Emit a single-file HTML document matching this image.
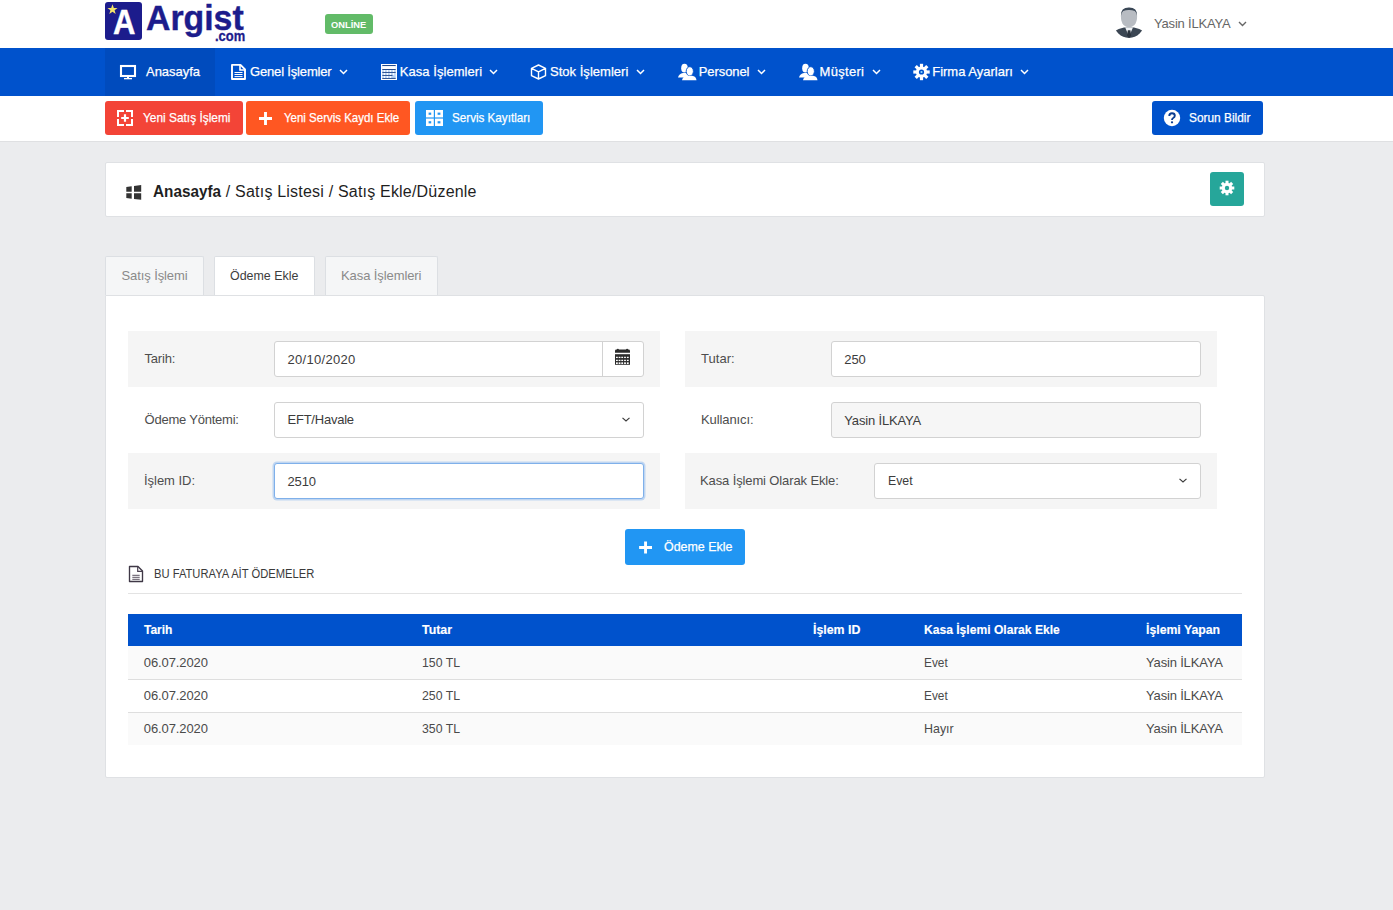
<!DOCTYPE html>
<html><head><meta charset="utf-8">
<style>
*{box-sizing:border-box;margin:0;padding:0}
html,body{width:1393px;height:910px;overflow:hidden;background:#ebecee;font-family:"Liberation Sans",sans-serif;color:#333}
.a{position:absolute}
.t{position:absolute;white-space:nowrap;line-height:1}
svg{position:absolute;overflow:visible}
.nv{position:absolute;color:#fff;font-size:13px;top:65px;line-height:1;white-space:nowrap;-webkit-text-stroke:0.25px #fff}
.bt{position:absolute;color:#fff;font-size:13px;top:111px;line-height:1;white-space:nowrap;-webkit-text-stroke:0.25px #fff}
.card{position:absolute;background:#fff;border:1px solid #dfe1e4;border-radius:2px}
.row{position:absolute;height:56px;background:#f5f5f5}
.lbl{position:absolute;font-size:13px;color:#4d4d4d;line-height:1;white-space:nowrap}
.inp{position:absolute;height:36px;border:1px solid #d2d2d2;border-radius:3px;background:#fff}
.iv{position:absolute;font-size:13px;color:#3c3c3c;line-height:1;white-space:nowrap}
.th{position:absolute;color:#fff;font-weight:bold;font-size:13px;line-height:1;top:623px;white-space:nowrap;-webkit-text-stroke:0.15px #fff}
.td{position:absolute;color:#4a4a4a;font-size:13px;line-height:1;white-space:nowrap}
</style></head><body>
<!-- header -->
<div class="a" style="left:0;top:0;width:1393px;height:48px;background:#fff"></div>
<div class="a" style="left:0;top:48px;width:1393px;height:48px;background:#0052cc"></div>
<div class="a" style="left:0;top:96px;width:1393px;height:46px;background:#fff;border-bottom:1px solid #dfe0e2"></div>

<!-- logo -->
<div class="a" style="left:105px;top:2px;width:37px;height:38px;background:#1c1c8c;border-radius:3px"></div>
<svg style="left:107px;top:4px" width="11" height="11" viewBox="0 0 10 10"><polygon fill="#f3e46a" points="5,0.3 6.2,3.6 9.6,3.6 6.9,5.7 7.9,9.2 5,7.1 2.1,9.2 3.1,5.7 0.4,3.6 3.8,3.6"/></svg>
<div class="t" style="left:112.8px;top:4.6px;font-size:35.5px;font-weight:bold;color:#fff;-webkit-text-stroke:0.4px #fff;transform:scaleX(0.875);transform-origin:0 0">A</div>
<div class="t" style="left:146px;top:0.8px;font-size:35.5px;font-weight:bold;color:#1c1c8c;-webkit-text-stroke:0.4px #1c1c8c;transform:scaleX(0.952);transform-origin:0 0">Argist</div>
<div class="t" style="left:215px;top:28.3px;font-size:15px;font-weight:bold;color:#1c1c8c;-webkit-text-stroke:0.3px #1c1c8c;transform:scaleX(0.86);transform-origin:0 0">.com</div>

<!-- online -->
<div class="a" style="left:325px;top:14px;width:48px;height:20px;background:#62bb68;border-radius:3px"></div>
<div class="t" style="left:331px;top:19.8px;font-size:9.5px;font-weight:bold;color:#fff;transform:scaleX(0.98);transform-origin:0 0">ONLİNE</div>

<!-- avatar -->
<svg style="left:1110px;top:2px" width="40" height="40" viewBox="0 0 40 40">
 <defs><clipPath id="avc"><circle cx="19" cy="21" r="15"/></clipPath></defs>
 <g clip-path="url(#avc)">
 <path d="M2 40 L2 31 Q7 27 14 25.6 L24 25.6 Q31 27 36 31 L36 40 Z" fill="#3b4653"/>
 <path d="M15.2 25.6 L19 34.5 L23 25.6 Z" fill="#eef1f4"/>
 <path d="M17.8 28.3 L20.4 28.3 L21.1 33.5 L19.1 36 L17.1 33.5 Z" fill="#2a323d"/>
 </g>
 <path d="M10.9 14.5 Q10.9 5.8 19 5.8 Q27.1 5.8 27.1 14.5 Q27.1 20 24.5 23 Q22 25.3 19 25.3 Q16 25.3 13.5 23 Q10.9 20 10.9 14.5 Z" fill="#b8bcc2"/>
 <path d="M10.9 14 Q10.6 5.6 19 5.6 Q27.4 5.6 27.1 14 Q26.3 10 24.8 9 Q22 7.8 19 7.9 Q16 7.8 13.2 9 Q11.7 10 10.9 14 Z" fill="#3a4756"/>
</svg>
<div class="t" style="left:1154px;top:17px;font-size:13px;color:#666;letter-spacing:-0.18px">Yasin İLKAYA</div>
<svg style="left:1238px;top:21px" width="9" height="6" viewBox="0 0 9 6"><path d="M1 1 L4.5 4.5 L8 1" fill="none" stroke="#666" stroke-width="1.4"/></svg>

<!-- nav -->
<div class="a" style="left:105px;top:48px;width:110px;height:48px;background:#004bbd"></div>
<svg style="left:119px;top:64px" width="18" height="16" viewBox="0 0 18 16"><rect x="2" y="2" width="14" height="10" fill="none" stroke="#fff" stroke-width="2.1"/><rect x="8" y="12.5" width="2" height="2" fill="#fff"/><rect x="5" y="14" width="8" height="1.3" fill="#fff"/></svg>
<div class="nv" style="left:146px;letter-spacing:-0.03px">Anasayfa</div>

<svg style="left:230px;top:63px" width="17" height="18" viewBox="0 0 17 18"><path d="M2 1.9 L10.5 1.9 L15 6.4 L15 16 L2 16 Z" fill="none" stroke="#fff" stroke-width="1.9" stroke-linejoin="round"/><path d="M10 2 L10 7 L15 7" fill="none" stroke="#fff" stroke-width="1.6"/><path d="M4.5 9.5 H12.5 M4.5 11.5 H12.5 M4.5 13.6 H12.5" stroke="#fff" stroke-width="1"/></svg>
<div class="nv" style="left:250px;letter-spacing:-0.165px">Genel İşlemler</div>
<svg style="left:339px;top:69px" width="9" height="6" viewBox="0 0 9 6"><path d="M1 1 L4.5 4.5 L8 1" fill="none" stroke="#fff" stroke-width="1.5"/></svg>

<svg style="left:380px;top:63px" width="18" height="18" viewBox="0 0 18 18"><rect x="1" y="1" width="16" height="16" fill="#fff"/><rect x="2.3" y="2" width="13.4" height="14" fill="#b9d3f5"/><rect x="2.3" y="3.2" width="13.4" height="3" fill="#fff"/><path d="M2.3 2.5H15.7M2.3 6.5H15.7M2.3 9.4H15.7M2.3 12.4H12.5M2.3 15.4H15.7" stroke="#123a80" stroke-width="0.9"/><g fill="#fff"><circle cx="4.4" cy="8.0" r="0.9"/><circle cx="7.4" cy="8.0" r="0.9"/><circle cx="10.4" cy="8.0" r="0.9"/><circle cx="13.5" cy="8.0" r="0.9"/><circle cx="4.4" cy="11.0" r="0.9"/><circle cx="7.4" cy="11.0" r="0.9"/><circle cx="10.4" cy="11.0" r="0.9"/><circle cx="13.5" cy="11.0" r="0.9"/><circle cx="4.4" cy="14.0" r="0.9"/><circle cx="7.4" cy="14.0" r="0.9"/><circle cx="10.4" cy="14.0" r="0.9"/></g></svg>
<div class="nv" style="left:399.8px;letter-spacing:0.05px">Kasa İşlemleri</div>
<svg style="left:489px;top:69px" width="9" height="6" viewBox="0 0 9 6"><path d="M1 1 L4.5 4.5 L8 1" fill="none" stroke="#fff" stroke-width="1.5"/></svg>

<svg style="left:530px;top:64px" width="17" height="16" viewBox="0 0 17 16"><path d="M8.5 1 L15.5 4.3 L15.5 11.7 L8.5 15 L1.5 11.7 L1.5 4.3 Z M1.5 4.3 L8.5 7.8 L15.5 4.3 M8.5 7.8 V15" fill="none" stroke="#fff" stroke-width="1.4" stroke-linejoin="round"/></svg>
<div class="nv" style="left:550px;letter-spacing:0.02px">Stok İşlemleri</div>
<svg style="left:636px;top:69px" width="9" height="6" viewBox="0 0 9 6"><path d="M1 1 L4.5 4.5 L8 1" fill="none" stroke="#fff" stroke-width="1.5"/></svg>

<svg style="left:677px;top:63px" width="20" height="18" viewBox="0 0 20 18"><ellipse cx="7.5" cy="5.2" rx="3.3" ry="4.4" fill="#fff"/><path d="M1 14.5 Q2 10.5 6 10 L9 10 Q11 10.5 11.5 12 L11 14.5 Z" fill="#fff"/><ellipse cx="12.8" cy="8.3" rx="3.6" ry="4.6" fill="#fff" stroke="#0052cc" stroke-width="0.9"/><path d="M5 17.2 Q5.8 13.2 10.5 12.8 L15 12.8 Q19 13.2 19.5 17.2 Z" fill="#fff"/></svg>
<div class="nv" style="left:698.8px;letter-spacing:-0.1px">Personel</div>
<svg style="left:757px;top:69px" width="9" height="6" viewBox="0 0 9 6"><path d="M1 1 L4.5 4.5 L8 1" fill="none" stroke="#fff" stroke-width="1.5"/></svg>

<svg style="left:798px;top:63px" width="20" height="18" viewBox="0 0 20 18"><ellipse cx="7.5" cy="5.2" rx="3.3" ry="4.4" fill="#fff"/><path d="M1 14.5 Q2 10.5 6 10 L9 10 Q11 10.5 11.5 12 L11 14.5 Z" fill="#fff"/><ellipse cx="12.8" cy="8.3" rx="3.6" ry="4.6" fill="#fff" stroke="#0052cc" stroke-width="0.9"/><path d="M5 17.2 Q5.8 13.2 10.5 12.8 L15 12.8 Q19 13.2 19.5 17.2 Z" fill="#fff"/></svg>
<div class="nv" style="left:819.6px;letter-spacing:0.3px">Müşteri</div>
<svg style="left:872px;top:69px" width="9" height="6" viewBox="0 0 9 6"><path d="M1 1 L4.5 4.5 L8 1" fill="none" stroke="#fff" stroke-width="1.5"/></svg>

<svg style="left:912px;top:63px" width="19" height="18" viewBox="0 0 19 18"><g transform="translate(9.5,9)" fill="#fff"><circle r="5.6"/><rect x="-1.6" y="-8.2" width="3.2" height="16.4"/><rect x="-1.6" y="-8.2" width="3.2" height="16.4" transform="rotate(45)"/><rect x="-1.6" y="-8.2" width="3.2" height="16.4" transform="rotate(90)"/><rect x="-1.6" y="-8.2" width="3.2" height="16.4" transform="rotate(135)"/><circle r="2.6" fill="#0052cc"/><circle r="1.1" fill="#8fd8ff"/></g></svg>
<div class="nv" style="left:932.2px;letter-spacing:0px">Firma Ayarları</div>
<svg style="left:1020px;top:69px" width="9" height="6" viewBox="0 0 9 6"><path d="M1 1 L4.5 4.5 L8 1" fill="none" stroke="#fff" stroke-width="1.5"/></svg>

<!-- toolbar buttons -->
<div class="a" style="left:105px;top:101px;width:138px;height:34px;background:#f34437;border-radius:3px"></div>
<div class="a" style="left:246px;top:101px;width:164px;height:34px;background:#ff5722;border-radius:3px"></div>
<div class="a" style="left:415px;top:101px;width:128px;height:34px;background:#2196f3;border-radius:3px"></div>
<div class="a" style="left:1152px;top:101px;width:111px;height:34px;background:#0052cc;border-radius:3px"></div>

<svg style="left:116px;top:109px" width="18" height="18" viewBox="0 0 18 18"><path d="M8 2 H2 V8 M10 2 H16 V8 M16 10 V16 H10 M8 16 H2 V10" fill="none" stroke="#fff" stroke-width="2"/><path d="M9 5.2 V12.8 M5.2 9 H12.8" stroke="#fff" stroke-width="2.2"/></svg>
<div class="bt" style="left:143px;transform:scaleX(0.915);transform-origin:0 0">Yeni Satış İşlemi</div>

<svg style="left:258px;top:111px" width="15" height="15" viewBox="0 0 15 15"><path d="M7.5 1 V14 M1 7.5 H14" stroke="#fff" stroke-width="2.9"/></svg>
<div class="bt" style="left:284px;transform:scaleX(0.883);transform-origin:0 0">Yeni Servis Kaydı Ekle</div>

<svg style="left:426px;top:110px" width="17" height="16" viewBox="0 0 17 16"><g fill="none" stroke="#fff" stroke-width="2.6"><rect x="1.3" y="1.3" width="5.2" height="4.8"/><rect x="10.3" y="1.3" width="5.4" height="4.8"/><rect x="1.3" y="9.9" width="5.2" height="4.8"/><rect x="10.3" y="9.9" width="5.4" height="4.8"/></g></svg>
<div class="bt" style="left:452px;transform:scaleX(0.896);transform-origin:0 0">Servis Kayıtları</div>

<svg style="left:1163px;top:109px" width="18" height="18" viewBox="0 0 18 18"><circle cx="9" cy="9" r="8.2" fill="#fff"/><path d="M6.3 6.9 Q6.3 4.2 9 4.2 Q11.8 4.2 11.8 6.7 Q11.8 8.2 10.2 9 Q9 9.6 9 11" fill="none" stroke="#0b3d91" stroke-width="1.9"/><circle cx="9" cy="13.3" r="1.15" fill="#0b3d91"/></svg>
<div class="t" style="left:1189px;top:111px;font-size:13px;color:#fff;-webkit-text-stroke:0.25px #fff;transform:scaleX(0.914);transform-origin:0 0">Sorun Bildir</div>

<!-- breadcrumb -->
<div class="card" style="left:105px;top:162px;width:1160px;height:55px"></div>
<svg style="left:126px;top:185px" width="16" height="16" viewBox="0 0 16 16"><path d="M0.3 1.9 L5.7 1.3 V6.7 H0.3 Z M8 1 L15.2 0.1 V6.7 H8 Z M0.3 8.2 H5.7 V13.8 L0.3 13.1 Z M8 8.2 H15.2 V14.8 L8 14 Z" fill="#333"/></svg>
<div class="t" style="left:153.2px;top:183.5px;font-size:16px;color:#1f1f1f"><b style="display:inline-block;transform:scaleX(0.956);transform-origin:0 0;width:68px">Anasayfa</b><span style="letter-spacing:0.2px"> / Satış Listesi / Satış Ekle/Düzenle</span></div>
<div class="a" style="left:1210px;top:172px;width:34px;height:34px;background:#26a69a;border-radius:3px"></div>
<svg style="left:1219px;top:180px" width="16" height="16" viewBox="0 0 16 16"><g transform="translate(8,8)" fill="#fff"><circle r="5.2"/><rect x="-1.5" y="-7.3" width="3" height="14.6"/><rect x="-1.5" y="-7.3" width="3" height="14.6" transform="rotate(45)"/><rect x="-1.5" y="-7.3" width="3" height="14.6" transform="rotate(90)"/><rect x="-1.5" y="-7.3" width="3" height="14.6" transform="rotate(135)"/><circle r="2.2" fill="#26a69a"/></g></svg>

<!-- tabs -->
<div class="a" style="left:105px;top:256px;width:99px;height:39px;background:#f5f6f7;border:1px solid #dcdfe3;border-bottom:0;border-radius:2px 2px 0 0"></div>
<div class="a" style="left:214px;top:256px;width:101px;height:39px;background:#fff;border:1px solid #dcdfe3;border-bottom:0;border-radius:2px 2px 0 0"></div>
<div class="a" style="left:325px;top:256px;width:113px;height:39px;background:#f5f6f7;border:1px solid #dcdfe3;border-bottom:0;border-radius:2px 2px 0 0"></div>
<div class="t" style="left:121.5px;top:268.6px;font-size:13px;color:#8a8a8a;letter-spacing:-0.1px">Satış İşlemi</div>
<div class="t" style="left:230px;top:268.6px;font-size:13px;color:#3d3d3d;transform:scaleX(0.956);transform-origin:0 0">Ödeme Ekle</div>
<div class="t" style="left:341px;top:268.6px;font-size:13px;color:#8a8a8a;letter-spacing:-0.09px">Kasa İşlemleri</div>

<!-- content card -->
<div class="card" style="left:105px;top:295px;width:1160px;height:483px;border-radius:0 2px 2px 2px"></div>

<div class="row" style="left:128px;top:331px;width:532px"></div>
<div class="row" style="left:128px;top:453px;width:532px"></div>
<div class="row" style="left:685px;top:331px;width:532px"></div>
<div class="row" style="left:685px;top:453px;width:532px"></div>

<div class="lbl" style="left:144.5px;top:351.8px;letter-spacing:-0.18px">Tarih:</div>
<div class="lbl" style="left:144.5px;top:413.3px;letter-spacing:-0.22px">Ödeme Yöntemi:</div>
<div class="lbl" style="left:144px;top:474.3px;letter-spacing:-0.03px">İşlem ID:</div>
<div class="lbl" style="left:701px;top:352.3px;letter-spacing:0.04px">Tutar:</div>
<div class="lbl" style="left:701px;top:413.3px;letter-spacing:-0.1px">Kullanıcı:</div>
<div class="lbl" style="left:700px;top:474.3px;letter-spacing:-0.12px">Kasa İşlemi Olarak Ekle:</div>

<div class="inp" style="left:274px;top:341px;width:370px"></div>
<div class="a" style="left:602px;top:342px;width:1px;height:34px;background:#d2d2d2"></div>
<svg style="left:615px;top:348px" width="15" height="17" viewBox="0 0 15 17"><path d="M0 3 Q0 1.6 1.4 1.6 L13.6 1.6 Q15 1.6 15 3 L15 4.8 L0 4.8 Z" fill="#2b2b2b"/><circle cx="2.85" cy="1.7" r="1.05" fill="#2b2b2b"/><circle cx="12.1" cy="1.7" r="1.05" fill="#2b2b2b"/><rect x="0" y="6.2" width="15" height="10.6" fill="#2b2b2b"/><g fill="#fff"><rect x="1.00" y="8.75" width="1.8" height="1.3"/><rect x="3.65" y="8.75" width="1.8" height="1.3"/><rect x="6.30" y="8.75" width="1.8" height="1.3"/><rect x="9.10" y="8.75" width="1.8" height="1.3"/><rect x="11.90" y="8.75" width="1.8" height="1.3"/><rect x="1.00" y="11.75" width="1.8" height="1.3"/><rect x="3.65" y="11.75" width="1.8" height="1.3"/><rect x="6.30" y="11.75" width="1.8" height="1.3"/><rect x="9.10" y="11.75" width="1.8" height="1.3"/><rect x="11.90" y="11.75" width="1.8" height="1.3"/><rect x="1.00" y="14.35" width="1.8" height="1.7"/><rect x="3.65" y="14.35" width="1.8" height="1.7"/><rect x="6.30" y="14.35" width="1.8" height="1.7"/><rect x="9.10" y="14.35" width="1.8" height="1.7"/><rect x="11.90" y="14.35" width="1.8" height="1.7"/></g></svg>
<div class="iv" style="left:287.5px;top:353.3px;letter-spacing:0.29px">20/10/2020</div>

<div class="inp" style="left:274px;top:402px;width:370px"></div>
<div class="iv" style="left:287.5px;top:412.7px;letter-spacing:-0.23px">EFT/Havale</div>
<svg style="left:621px;top:416px" width="10" height="7" viewBox="0 0 10 7"><path d="M1.5 1.8 L5 5 L8.5 1.8" fill="none" stroke="#3a3a3a" stroke-width="1.15"/></svg>

<div class="inp" style="left:274px;top:463px;width:370px;border-color:#7fb0ea;box-shadow:0 0 0 1.5px rgba(128,178,238,0.45)"></div>
<div class="iv" style="left:287.5px;top:474.6px;letter-spacing:-0.15px">2510</div>

<div class="inp" style="left:831px;top:341px;width:370px"></div>
<div class="iv" style="left:844.3px;top:353.3px;letter-spacing:-0.1px">250</div>
<div class="inp" style="left:831px;top:402px;width:370px;background:#f6f6f6"></div>
<div class="iv" style="left:844.3px;top:413.6px;letter-spacing:-0.17px">Yasin İLKAYA</div>
<div class="inp" style="left:874px;top:463px;width:327px"></div>
<div class="iv" style="left:887.6px;top:473.8px;transform:scaleX(0.946);transform-origin:0 0">Evet</div>
<svg style="left:1178px;top:477px" width="10" height="7" viewBox="0 0 10 7"><path d="M1.5 1.8 L5 5 L8.5 1.8" fill="none" stroke="#3a3a3a" stroke-width="1.15"/></svg>

<div class="a" style="left:625px;top:529px;width:120px;height:36px;background:#2196f3;border-radius:3px"></div>
<svg style="left:639px;top:540.5px" width="13" height="13" viewBox="0 0 13 13"><path d="M6.55 0.4 V12.6 M0.1 6.5 H13" stroke="#fff" stroke-width="2.9"/></svg>
<div class="t" style="left:664.2px;top:539.8px;font-size:13px;color:#fff;-webkit-text-stroke:0.25px #fff;transform:scaleX(0.955);transform-origin:0 0">Ödeme Ekle</div>

<svg style="left:128px;top:565px" width="16" height="18" viewBox="0 0 16 18"><path d="M1.5 1.5 L10 1.5 L14.5 6 L14.5 16.5 L1.5 16.5 Z" fill="none" stroke="#3f3846" stroke-width="1.35" stroke-linejoin="round"/><path d="M9.7 1.7 L9.7 6.3 L14.3 6.3" fill="none" stroke="#4a4050" stroke-width="1.2"/><path d="M4.3 10.3 H11.7 M4.3 12.3 H11.7 M4.3 14.3 H11.7" stroke="#4a4050" stroke-width="0.9"/></svg>
<div class="t" style="left:154.4px;top:567.8px;font-size:12px;color:#3a3a3a;transform:scaleX(0.933);transform-origin:0 0">BU FATURAYA AİT ÖDEMELER</div>
<div class="a" style="left:128px;top:593px;width:1114px;height:1px;background:#e3e3e3"></div>

<!-- table -->
<div class="a" style="left:128px;top:614px;width:1114px;height:32px;background:#0052cc"></div>
<div class="th" style="left:143.8px;transform:scaleX(0.922);transform-origin:0 0">Tarih</div>
<div class="th" style="left:421.6px;transform:scaleX(0.951);transform-origin:0 0">Tutar</div>
<div class="th" style="left:813.4px;transform:scaleX(0.951);transform-origin:0 0">İşlem ID</div>
<div class="th" style="left:924.3px;transform:scaleX(0.93);transform-origin:0 0">Kasa İşlemi Olarak Ekle</div>
<div class="th" style="left:1146.1px;transform:scaleX(0.943);transform-origin:0 0">İşlemi Yapan</div>

<div class="a" style="left:128px;top:646px;width:1114px;height:34px;background:#fafafa;border-bottom:1px solid #dedede"></div>
<div class="a" style="left:128px;top:680px;width:1114px;height:33px;background:#fff;border-bottom:1px solid #dedede"></div>
<div class="a" style="left:128px;top:713px;width:1114px;height:32px;background:#fafafa"></div>

<div class="td" style="left:143.8px;top:655.9px;letter-spacing:-0.1px">06.07.2020</div>
<div class="td" style="left:421.6px;top:655.9px;transform:scaleX(0.946);transform-origin:0 0">150 TL</div>
<div class="td" style="left:924.3px;top:655.9px;transform:scaleX(0.911);transform-origin:0 0">Evet</div>
<div class="td" style="left:1146.1px;top:655.9px;letter-spacing:-0.18px">Yasin İLKAYA</div>

<div class="td" style="left:143.8px;top:689px;letter-spacing:-0.1px">06.07.2020</div>
<div class="td" style="left:421.6px;top:689px;transform:scaleX(0.946);transform-origin:0 0">250 TL</div>
<div class="td" style="left:924.3px;top:689px;transform:scaleX(0.911);transform-origin:0 0">Evet</div>
<div class="td" style="left:1146.1px;top:689px;letter-spacing:-0.18px">Yasin İLKAYA</div>

<div class="td" style="left:143.8px;top:721.9px;letter-spacing:-0.1px">06.07.2020</div>
<div class="td" style="left:421.6px;top:721.9px;transform:scaleX(0.946);transform-origin:0 0">350 TL</div>
<div class="td" style="left:924.3px;top:721.9px;transform:scaleX(0.956);transform-origin:0 0">Hayır</div>
<div class="td" style="left:1146.1px;top:721.9px;letter-spacing:-0.18px">Yasin İLKAYA</div>

</body></html>
